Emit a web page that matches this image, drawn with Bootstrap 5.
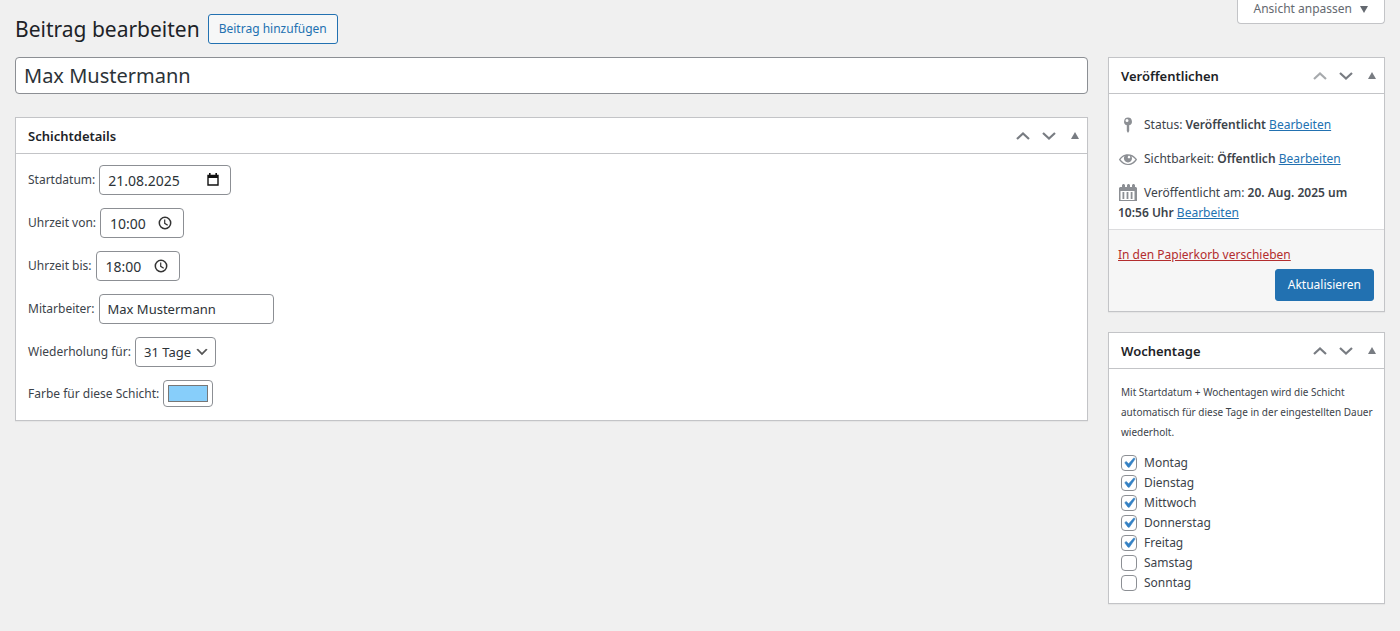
<!DOCTYPE html>
<html lang="de">
<head>
<meta charset="utf-8">
<meta name="viewport" content="width=device-width, initial-scale=1">
<title>Beitrag bearbeiten</title>
<link href="https://cdn.jsdelivr.net/npm/bootstrap@5.3.0/dist/css/bootstrap.min.css" rel="stylesheet">
<style>
  :root { --line: #c3c4c7; --field: #8c8f94; --ink: #3c434a; --dark: #1d2327; --blue: #2271b1; }
  body { background: #f0f0f0; color: var(--ink); font: 12px/20px "Noto Sans", "Open Sans", sans-serif; }
  a { color: var(--blue); }
  .page { padding: 0 15px 28px; }
  .topbar { height: 57px; }
  .title-wrap { padding-top: 14px; }
  .page-title { font-size: 21px; line-height: 30px; color: var(--dark); font-weight: 400; }
  .btn-add { --bs-btn-font-size: 12px; --bs-btn-line-height: 20px; --bs-btn-padding-y: 4px; --bs-btn-padding-x: 10px; --bs-btn-border-radius: 3px;
    --bs-btn-color: var(--blue); --bs-btn-border-color: var(--blue); --bs-btn-bg: #f6f7f7; }
  .btn-screen { --bs-btn-font-size: 12px; --bs-btn-line-height: 18px; --bs-btn-padding-y: 0; --bs-btn-padding-x: 16px; --bs-btn-border-radius: 0 0 4px 4px;
    --bs-btn-color: #646970; --bs-btn-border-color: var(--line); --bs-btn-bg: #fff; padding-bottom: 5px; border-top: 0; }
  .columns { gap: 20px; }
  .side { width: 277px; gap: 20px; }
  .form-control, .form-select { border-color: var(--field); border-radius: 4px; }
  .title-field { height: 37px; padding: 0 8px; margin-bottom: 23px; font-size: 20px; color: #2c3338; }
  .panel { background: #fff; border: 1px solid var(--line); box-shadow: 0 1px 1px rgba(0,0,0,.04); }
  .panel-head { height: 36px; padding: 0 6px 0 12px; border-bottom: 1px solid var(--line); }
  .panel-head h2 { font-size: 13px; line-height: 18px; font-weight: 600; color: var(--dark); }
  .icon-btn { width: 26px; height: 26px; border: 0; padding: 0; background: none; color: #787c82; display: flex; align-items: center; justify-content: center; }
  .icon-btn:disabled { color: #a7aaad; }
  .icon-btn.toggle { width: 12px; margin-left: 7px; }
  .form-rows { gap: 13px; padding: 11px 12px 13px; }
  .text-field { height: 30px; padding: 0 8px; font-size: 13px; color: #2c3338; }
  .f-date { width: 132px; font-size: 14px; } .f-time { width: 84px; padding-left: 9px; font-size: 14px; } .f-name { width: 175px; }
  .field-icon { position: absolute; top: 8px; right: 12px; }
  .f-select { width: 81px; height: 30px; padding: 0 24px 0 8px; font-size: 13px; line-height: 28px; color: #2c3338; background-size: 16px 16px; background-position: right 5px center;
    background-image: url("data:image/svg+xml,%3csvg xmlns='http://www.w3.org/2000/svg' viewBox='0 0 20 20'%3e%3cpath d='M5 6l5 5 5-5 2 1-7 7-7-7 2-1z' fill='%23555'/%3e%3c/svg%3e"); }
  .f-color { width: 50px; height: 27px; padding: 4px; min-height: 0; }
  .f-color::-webkit-color-swatch { border: 1px solid #777 !important; border-radius: 0; }
  .f-color::-webkit-color-swatch-wrapper { padding: 0; }
  .publish { padding: 21px 9px 6px; }
  .publish p { margin-bottom: 14px; }
  .publish p:last-child { margin-bottom: 0; }
  .publish svg { width: 20px; height: 20px; margin-right: 6px; vertical-align: top; fill: #8c8f94; }
  .publish b { font-weight: 600; }
  .actions { background: #f6f6f6; border-top: 1px solid #dcdcde; padding: 15px 10px 10px 9px; }
  .trash { color: #b32d2e; }
  .btn-save { --bs-btn-font-size: 12px; --bs-btn-line-height: 30px; --bs-btn-padding-y: 0; --bs-btn-padding-x: 12px; --bs-btn-border-radius: 3px;
    --bs-btn-bg: var(--blue); --bs-btn-border-color: var(--blue); --bs-btn-color: #fff; }
  .days { padding: 13px 8px 10px 12px; }
  .hint { font-size: 10px; margin-bottom: 11px; }
  .days .form-check-input { width: 16px; height: 16px; margin: 0 7px 0 0; border-color: var(--field); border-radius: 4px; background-size: 20px; }
  .days .form-check-input:checked { background-color: #fff;
    background-image: url("data:image/svg+xml,%3csvg xmlns='http://www.w3.org/2000/svg' viewBox='0 0 20 20'%3e%3cpath d='M14.83 4.89l1.34.94-5.81 8.38H9.02L5.78 9.67l1.34-1.25 2.57 2.4z' fill='%233582c4' stroke='%233582c4' stroke-width='.6'/%3e%3c/svg%3e"); }
</style>
</head>
<body>
<svg class="d-none" aria-hidden="true">
  <symbol id="up" viewBox="0 0 14 8"><path d="M1 7l6-5.500L13 7" fill="none" stroke="currentColor" stroke-width="2.200"/></symbol>
  <symbol id="down" viewBox="0 0 14 8"><path d="M1 1l6 5.500L13 1" fill="none" stroke="currentColor" stroke-width="2.200"/></symbol>
  <symbol id="tri" viewBox="0 0 8 7"><path d="M4 0l4 7H0z" fill="currentColor"/></symbol>
  <symbol id="clock" viewBox="0 0 14 14"><circle cx="7" cy="7" r="5.700" fill="none" stroke="#333" stroke-width="1.500"/><path d="M6.700 3.500v3.800l3 1.900" fill="none" stroke="#333" stroke-width="1.200"/></symbol>
</svg>
<div class="page">
  <header class="topbar d-flex justify-content-between align-items-start">
    <div class="title-wrap d-flex align-items-center gap-2">
      <h1 class="page-title mb-0">Beitrag bearbeiten</h1>
      <button type="button" class="btn btn-add">Beitrag hinzufügen</button>
    </div>
    <button type="button" class="btn btn-screen d-flex align-items-center gap-2">Ansicht anpassen
      <svg width="8" height="7" viewBox="0 0 8 7"><path d="M0 0h8L4 7z" fill="#646970"/></svg></button>
  </header>
  <div class="columns d-flex align-items-start">
    <main class="flex-grow-1">
      <input type="text" class="form-control title-field" aria-label="Titel" value="Max Mustermann">
      <section class="panel">
        <div class="panel-head d-flex align-items-center">
          <h2 class="mb-0 me-auto">Schichtdetails</h2>
          <button class="icon-btn" aria-label="Nach oben"><svg width="14" height="8"><use href="#up"/></svg></button>
          <button class="icon-btn" aria-label="Nach unten"><svg width="14" height="8"><use href="#down"/></svg></button>
          <button class="icon-btn toggle" aria-label="Umschalten"><svg width="8" height="7"><use href="#tri"/></svg></button>
        </div>
        <form class="form-rows d-flex flex-column">
          <div class="d-flex align-items-center gap-1"><label for="start">Startdatum:</label>
            <div class="position-relative"><input id="start" type="text" class="form-control text-field f-date" value="21.08.2025">
              <svg class="field-icon" width="12" height="13" viewBox="0 0 12 13"><path d="M1 2.500h10V12H1z" fill="none" stroke="#111" stroke-width="1.400"/><path d="M1 2h10v3H1zM2 0h1.600v2H2zM8.400 0H10v2H8.400z" fill="#111"/></svg></div></div>
          <div class="d-flex align-items-center gap-1"><label for="von">Uhrzeit von:</label>
            <div class="position-relative"><input id="von" type="text" class="form-control text-field f-time" value="10:00">
              <svg class="field-icon" width="14" height="14"><use href="#clock"/></svg></div></div>
          <div class="d-flex align-items-center gap-1"><label for="bis">Uhrzeit bis:</label>
            <div class="position-relative"><input id="bis" type="text" class="form-control text-field f-time" value="18:00">
              <svg class="field-icon" width="14" height="14"><use href="#clock"/></svg></div></div>
          <div class="d-flex align-items-center gap-1"><label for="name">Mitarbeiter:</label>
            <input id="name" type="text" class="form-control text-field f-name" value="Max Mustermann"></div>
          <div class="d-flex align-items-center gap-1"><label for="rep">Wiederholung für:</label>
            <select id="rep" class="form-select f-select"><option>31 Tage</option></select></div>
          <div class="d-flex align-items-center gap-1"><label for="farbe">Farbe für diese Schicht:</label>
            <input id="farbe" type="color" class="form-control f-color" value="#87cefa"></div>
        </form>
      </section>
    </main>
    <aside class="side flex-shrink-0 d-flex flex-column">
      <section class="panel">
        <div class="panel-head d-flex align-items-center">
          <h2 class="mb-0 me-auto">Veröffentlichen</h2>
          <button class="icon-btn" aria-label="Nach oben" disabled><svg width="14" height="8"><use href="#up"/></svg></button>
          <button class="icon-btn" aria-label="Nach unten"><svg width="14" height="8"><use href="#down"/></svg></button>
          <button class="icon-btn toggle" aria-label="Umschalten"><svg width="8" height="7"><use href="#tri"/></svg></button>
        </div>
        <div class="publish">
          <p><svg viewBox="0 0 20 20"><path fill-rule="evenodd" d="M10 2.500a4 4 0 0 1 1.200 7.800V16L10 18l-1.200-2v-5.700A4 4 0 0 1 10 2.500zM9 4a1.500 1.500 0 1 0 0 3 1.500 1.500 0 0 0 0-3z"/></svg>Status: <b>Veröffentlicht</b> <a href="#">Bearbeiten</a></p>
          <p><svg viewBox="0 0 20 20"><path fill-rule="evenodd" d="M18.300 9.500C15 4.900 8.500 3.800 3.900 7.200c-1.200.9-2.200 2.100-3 3.400.2.400.5.800.8 1.200 3.300 4.600 9.600 5.600 14.200 2.400.9-.7 1.700-1.400 2.400-2.400.3-.4.500-.8.800-1.200-.3-.4-.5-.8-.8-1.100zM10.100 7.200c.5-.5 1.300-.5 1.800 0s.5 1.300 0 1.800-1.300.5-1.800 0-.5-1.300 0-1.800zM10 14.900c-3.200 0-5.900-2.100-7.500-4.300 1.100-1.500 2.400-2.700 4.100-3.500-.5.700-.8 1.500-.7 2.400.1 2.200 2 4 4.200 3.900 2.200-.1 4-2 3.900-4.200 0-.7-.3-1.400-.7-2 1.700.8 3.100 1.900 4.200 3.400-1.600 2.200-4.300 4.300-7.500 4.300z"/></svg>Sichtbarkeit: <b>Öffentlich</b> <a href="#">Bearbeiten</a></p>
          <p><svg viewBox="0 0 20 20"><path fill-rule="evenodd" d="M2 4h2V2l1-1h1l1 1v2h2V2l1-1h1l1 1v2h2V2l1-1h1l1 1v2h1l1 1v13H1V5zM2.500 8v9h14V8zM4.500 9h1.800v7H4.500zM8.600 9h1.800v7H8.600zM12.700 9h1.800v7h-1.800z"/></svg>Veröffentlicht am: <b>20. Aug. 2025 um</b> <b>10:56 Uhr</b> <a href="#">Bearbeiten</a></p>
        </div>
        <div class="actions">
          <a href="#" class="trash">In den Papierkorb verschieben</a>
          <div class="text-end pt-1"><button type="button" class="btn btn-save">Aktualisieren</button></div>
        </div>
      </section>
      <section class="panel">
        <div class="panel-head d-flex align-items-center">
          <h2 class="mb-0 me-auto">Wochentage</h2>
          <button class="icon-btn" aria-label="Nach oben"><svg width="14" height="8"><use href="#up"/></svg></button>
          <button class="icon-btn" aria-label="Nach unten"><svg width="14" height="8"><use href="#down"/></svg></button>
          <button class="icon-btn toggle" aria-label="Umschalten"><svg width="8" height="7"><use href="#tri"/></svg></button>
        </div>
        <div class="days">
          <p class="hint">Mit Startdatum + Wochentagen wird die Schicht automatisch für diese Tage in der eingestellten Dauer wiederholt.</p>
          <div class="d-flex align-items-center"><input class="form-check-input" type="checkbox" id="d1" checked><label for="d1">Montag</label></div>
          <div class="d-flex align-items-center"><input class="form-check-input" type="checkbox" id="d2" checked><label for="d2">Dienstag</label></div>
          <div class="d-flex align-items-center"><input class="form-check-input" type="checkbox" id="d3" checked><label for="d3">Mittwoch</label></div>
          <div class="d-flex align-items-center"><input class="form-check-input" type="checkbox" id="d4" checked><label for="d4">Donnerstag</label></div>
          <div class="d-flex align-items-center"><input class="form-check-input" type="checkbox" id="d5" checked><label for="d5">Freitag</label></div>
          <div class="d-flex align-items-center"><input class="form-check-input" type="checkbox" id="d6"><label for="d6">Samstag</label></div>
          <div class="d-flex align-items-center"><input class="form-check-input" type="checkbox" id="d7"><label for="d7">Sonntag</label></div>
        </div>
      </section>
    </aside>
  </div>
</div>
<script src="https://cdn.jsdelivr.net/npm/bootstrap@5.3.0/dist/js/bootstrap.bundle.min.js"></script>
</body>
</html>
